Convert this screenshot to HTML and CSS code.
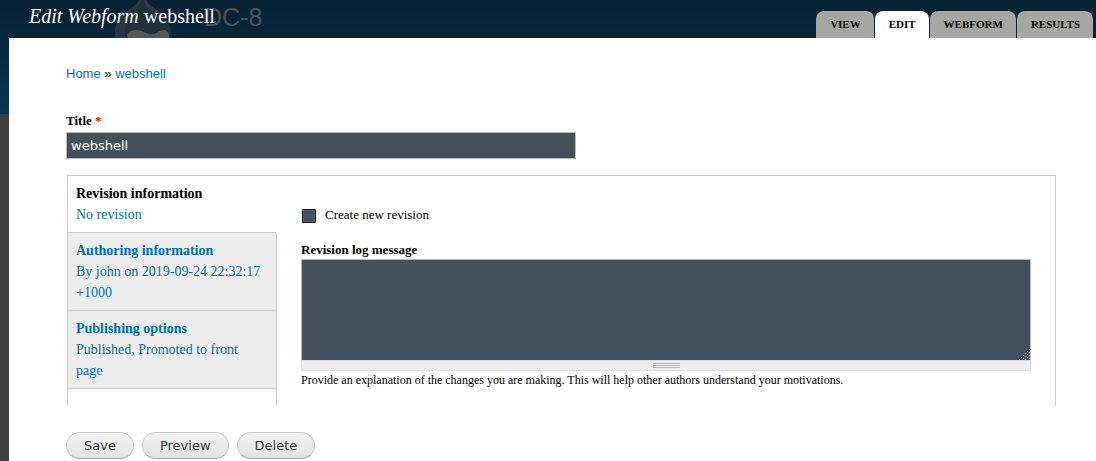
FILE: index.html
```html
<!DOCTYPE html>
<html lang="en">
<head>
<meta charset="utf-8">
<title>Edit Webform webshell</title>
<meta name="viewport" content="width=device-width, initial-scale=1">
<link rel="stylesheet" href="styles.css">
</head>
<body>
<div class="site-behind" aria-hidden="true">
  <svg class="site-logo" width="60" height="38" viewBox="0 0 60 38">
    <path d="M25 0c-2 4-5 6-9 9C7 14 1 22 1 33v5h56v-5c0-11-6-18-14-23-5-3-9-6-11-10z" fill="#1d303d"/>
    <path d="M25 0c-2 4-5 6-9 9C7 14 1 22 1 33v5h11c-3-10 1-22 10-29 3-3 5-6 6-9z" fill="#2d363c"/>
    <path d="M32 0c2 4 6 7 11 10 4 3 7 6 10 10-7-6-14-8-19-12-3-2-4-5-4-8z" fill="#343a3f"/>
    <path d="M14 38c-3-4 2-8 8-8 7 0 11 5 16 4 5 0 7-4 12-4 4 1 6 4 5 8z" fill="#565656"/>
  </svg>
  <span class="site-name">DC-8</span>
</div>
<div class="overlay">
  <header class="titlebar">
    <h1 class="page-title"><em>Edit Webform</em> webshell</h1>
    <nav class="tabs" aria-label="Primary tabs">
      <a class="tab" href="#view">View</a>
      <a class="tab tab-active" href="#edit" aria-current="page">Edit</a>
      <a class="tab" href="#webform">Webform</a>
      <a class="tab" href="#results">Results</a>
    </nav>
  </header>
  <main class="content">
    <nav class="breadcrumb" aria-label="Breadcrumb"><a href="#home">Home</a> » <a href="#webshell">webshell</a></nav>
    <form class="node-form">
      <label class="field-label" for="title">Title <span class="required">*</span></label>
      <input class="title-input" id="title" type="text" value="webshell" required>
      <div class="vertical-tabs">
        <div class="side">
          <a class="side-tab side-tab-active" href="#revision"><strong>Revision information</strong><span>No revision</span></a>
          <a class="side-tab" href="#author"><strong>Authoring information</strong><span>By john on 2019-09-24 22:32:17 +1000</span></a>
          <a class="side-tab" href="#options"><strong>Publishing options</strong><span>Published, Promoted to front page</span></a>
          <div class="side-rest"></div>
        </div>
        <section class="pane" id="revision">
          <div class="check-row">
            <input class="check" id="new-revision" type="checkbox">
            <label for="new-revision">Create new revision</label>
          </div>
          <label class="field-label" for="log">Revision log message</label>
          <div class="log-wrap">
            <textarea class="log" id="log" aria-describedby="log-help"></textarea>
            <svg class="corner" width="12" height="11" viewBox="0 0 12 11" aria-hidden="true">
              <path d="M10 0h1v1h-1zM8 2h1v1H8zM10 3h1v1h-1zM6 4h1v1H6zM8 5h1v1H8zM10 6h1v1h-1zM4 6h1v1H4zM6 7h1v1H6zM8 8h1v1H8zM2 8h1v1H2zM4 9h1v1H4zM10 9h1v1h-1zM0 10h1v1H0zM6 10h1v1H6z" fill="#bcc4ca"/>
            </svg>
            <div class="grippie">
              <svg width="27" height="5" viewBox="0 0 27 5" aria-hidden="true"><path d="M0 0h27v1H0zM0 2h27v1H0zM0 4h27v1H0z" fill="#b8b8b8"/></svg>
            </div>
          </div>
          <p class="help" id="log-help">Provide an explanation of the changes you are making. This will help other authors understand your motivations.</p>
        </section>
      </div>
      <div class="actions">
        <button class="button" type="button">Save</button>
        <button class="button" type="button">Preview</button>
        <button class="button" type="button">Delete</button>
      </div>
    </form>
  </main>
</div>
</body>
</html>
```

FILE: styles.css
```css
* {
  box-sizing: border-box;
}

body {
  margin: 0;
  min-height: 100vh;
  background: linear-gradient(#062234, #0b3450 114px, #404040 114px);
  background-color: #404040;
  color: #000;
  font: 13px/20px "Liberation Serif", "Times New Roman", serif;
}

a {
  color: #0071b3;
  text-decoration: none;
}

/* Dimmed site header that shows through the overlay */
.site-behind {
  position: absolute;
  top: 0;
  left: 114px;
  display: flex;
  gap: 30px;
}

.site-name {
  color: #4d5154;
  font: 25px/34px "Liberation Sans", Arial, sans-serif;
}

.overlay {
  position: relative;
  display: flex;
  flex-direction: column;
  min-height: 100vh;
  padding-left: 9px;
}

.titlebar {
  display: flex;
  align-items: flex-end;
  justify-content: space-between;
  height: 38px;
  padding: 0 3px 0 20px;
}

.page-title {
  margin: 0;
  align-self: flex-start;
  color: #fff;
  font-size: 20px;
  font-weight: 400;
  line-height: 32px;
}

.tabs {
  display: flex;
  gap: 1px;
}

.tab {
  padding: 0 13px 0 14px;
  border-radius: 8px 8px 0 0;
  background: #a6a7a2;
  color: #000;
  font-size: 11px;
  font-weight: 700;
  line-height: 27px;
  text-transform: uppercase;
}

.tab-active {
  background: #fff;
}

.content {
  flex: 1;
  padding: 26px 40px 2px 57px;
  background: #fff;
}

.breadcrumb {
  margin-bottom: 27px;
  font-family: "Liberation Sans", Arial, sans-serif;
}

.field-label {
  display: block;
  line-height: 19px;
  font-weight: 700;
}

.required {
  color: #f00;
}

.title-input {
  display: block;
  width: 510px;
  max-width: 100%;
  height: 27px;
  margin-top: 2px;
  padding: 2px 4px;
  border: 1px solid #b8babb;
  background: #44505c;
  color: #fff;
  font: 13px/20px "DejaVu Sans", sans-serif;
}

.vertical-tabs {
  display: flex;
  margin: 16px 0 26px 1px;
  border: 1px solid #ccc;
  border-bottom: 0;
}

.side {
  display: flex;
  flex: none;
  flex-direction: column;
  width: 209px;
  font-size: 14px;
  line-height: 21px;
}

.side-tab {
  padding: 7px 12px 7px 8px;
  border-right: 1px solid #ccc;
  border-bottom: 1px solid #ccc;
  background: #ededed;
}

.side-tab strong,
.side-tab span {
  display: block;
}

.side-tab-active {
  border-right-color: transparent;
  background: #fff;
}

.side-tab-active strong {
  color: #000;
}

.side-rest {
  flex: 1;
  min-height: 17px;
  border-right: 1px solid #ccc;
}

.pane {
  flex: 1;
  min-width: 0;
  padding: 29px 24px 0;
}

.check-row {
  display: flex;
  align-items: center;
  gap: 8px;
  margin-bottom: 15px;
}

.check {
  width: 14px;
  height: 14px;
  margin: 1px 1px 0;
  appearance: none;
  border: 1px solid #10161c;
  border-radius: 1px;
  background: #44505c;
  box-shadow: inset 0 0 0 1px #56616a;
}

.log-wrap {
  position: relative;
}

.log {
  display: block;
  width: 100%;
  height: 101px;
  padding: 4px;
  border: 1px solid #b8babb;
  border-bottom: 0;
  border-radius: 0;
  background: #44505c;
  color: #fff;
  font: 13px/20px "DejaVu Sans", sans-serif;
  resize: none;
}

.corner {
  position: absolute;
  top: 90px;
  right: 0;
}

.grippie {
  display: flex;
  align-items: center;
  justify-content: center;
  height: 11px;
  border: 1px solid #ddd;
  background: #eee;
}

.help {
  margin: 0;
  font-size: 12px;
  line-height: 19px;
}

.actions {
  display: flex;
  flex-wrap: wrap;
  gap: 8px;
}

.button {
  height: 27px;
  padding: 0 17px;
  border: 1px solid #ccc;
  border-bottom-color: #aaa;
  border-radius: 14px;
  background: linear-gradient(#f4f4f4, #e2e2e2);
  color: #3a3a3a;
  font: 13px/20px "DejaVu Sans", sans-serif;
}
```
